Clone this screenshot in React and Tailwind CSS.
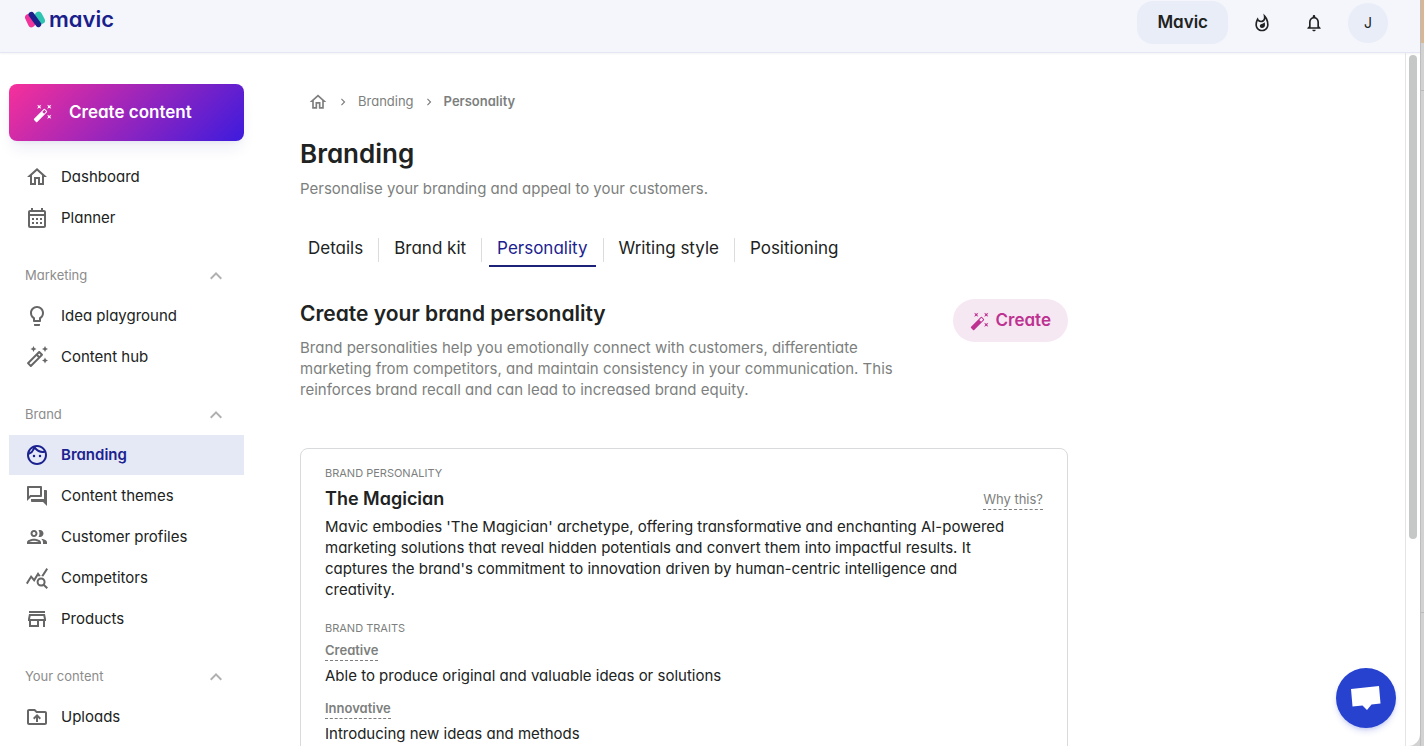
import { useState } from 'react';
import {
  MdAutoFixHigh,
  MdChevronRight,
  MdExpandLess,
  MdLightbulbOutline,
  MdNotificationsNone,
  MdOutlineAutoFixHigh,
  MdOutlineCalendarMonth,
  MdOutlineDriveFolderUpload,
  MdOutlineFace,
  MdOutlineForum,
  MdOutlineGroup,
  MdOutlineHome,
  MdOutlineStore,
  MdOutlineWhatshot,
  MdQueryStats,
} from 'react-icons/md';

const sections = [
  {
    items: [
      { label: 'Dashboard', icon: MdOutlineHome },
      { label: 'Planner', icon: MdOutlineCalendarMonth },
    ],
  },
  {
    title: 'Marketing',
    items: [
      { label: 'Idea playground', icon: MdLightbulbOutline },
      { label: 'Content hub', icon: MdOutlineAutoFixHigh },
    ],
  },
  {
    title: 'Brand',
    items: [
      { label: 'Branding', icon: MdOutlineFace },
      { label: 'Content themes', icon: MdOutlineForum },
      { label: 'Customer profiles', icon: MdOutlineGroup },
      { label: 'Competitors', icon: MdQueryStats },
      { label: 'Products', icon: MdOutlineStore },
    ],
  },
  {
    title: 'Your content',
    items: [{ label: 'Uploads', icon: MdOutlineDriveFolderUpload }],
  },
];

const tabs = ['Details', 'Brand kit', 'Personality', 'Writing style', 'Positioning'];

const traits = [
  { name: 'Creative', text: 'Able to produce original and valuable ideas or solutions' },
  { name: 'Innovative', text: 'Introducing new ideas and methods' },
];

function Logo() {
  return (
    <a href="#" className="flex items-center gap-1 text-[#1a1f8c]">
      <svg width="20" height="17" viewBox="0 0 20 17" strokeLinecap="round">
        <path d="M3.600 6.500 6.500 12.800" stroke="#f0349b" strokeWidth="7" />
        <path d="M13.600 4.200 16.400 9.500" stroke="#2fc4b2" strokeWidth="7" />
        <path d="M6.400 3.600 13.400 13.400" stroke="#1a1f8c" strokeWidth="5.600" />
      </svg>
      <span className="text-[22px] leading-6 font-semibold">mavic</span>
    </a>
  );
}

function Header() {
  return (
    <header className="flex h-[53px] shrink-0 items-start justify-between border-b border-[#e3e6f4] bg-[#f5f6fc] pr-8 pl-[25px] shadow-xs">
      <div className="pt-[7px]">
        <Logo />
      </div>
      <div className="flex items-center pt-px">
        <button className="h-[43px] rounded-2xl bg-[#e9edf8] px-5 text-[17px] font-semibold">Mavic</button>
        <button aria-label="Trending" className="ml-[23px] p-px">
          <MdOutlineWhatshot size={20} />
        </button>
        <button aria-label="Notifications" className="ml-[30px] p-px">
          <MdNotificationsNone size={20} />
        </button>
        <button className="ml-[23px] size-10 rounded-full bg-[#e9edf8] text-sm">J</button>
      </div>
    </header>
  );
}

function NavItem({ item, active, onSelect }) {
  const Icon = item.icon;
  return (
    <button
      onClick={() => onSelect(item.label)}
      className={`flex h-10 w-full items-center gap-3 px-4 text-left text-[15px] ${
        active ? 'bg-[#e5e8f5] font-semibold text-[#1b2290]' : ''
      }`}
    >
      <Icon size={24} className={active ? '' : 'text-[#666]'} />
      {item.label}
    </button>
  );
}

function Sidebar() {
  const [active, setActive] = useState('Branding');

  return (
    <aside className="flex w-[244px] shrink-0 flex-col pt-[31px] pl-[9px]">
      <button className="mb-4 flex h-[57px] shrink-0 items-center gap-4 rounded-lg bg-linear-135/srgb from-[#f7309a] to-[#3d1bdd] px-6 text-[17px] font-semibold text-white shadow-lg shadow-[#1b229014]">
        <MdAutoFixHigh size={20} />
        Create content
      </button>
      {sections.map((section) => (
        <div key={section.items[0].label} className="mb-[18px] shrink-0">
          {section.title && (
            <button className="flex h-10 w-full items-center justify-between px-4 text-[13px] text-[#8c8c8c]">
              {section.title}
              <MdExpandLess size={24} className="text-[#b0b0b0]" />
            </button>
          )}
          <nav className="flex flex-col gap-px">
            {section.items.map((item) => (
              <NavItem key={item.label} item={item} active={item.label === active} onSelect={setActive} />
            ))}
          </nav>
        </div>
      ))}
    </aside>
  );
}

function Breadcrumbs() {
  return (
    <nav aria-label="Breadcrumb" className="flex h-5 items-center gap-2 px-2 text-[13px] text-[#7d7f7e]">
      <a href="#" aria-label="Home">
        <MdOutlineHome size={20} />
      </a>
      <MdChevronRight size={14} />
      <a href="#">Branding</a>
      <MdChevronRight size={14} />
      <span className="font-semibold">Personality</span>
    </nav>
  );
}

function Tabs() {
  const [selected, setSelected] = useState('Personality');

  return (
    <div className="mt-[34px] flex">
      {tabs.map((tab, i) => (
        <div key={tab} className="flex items-start">
          {i > 0 && <span className="mx-[7px] mt-[5px] h-6 w-px bg-[#dcdcdc]" />}
          <button
            onClick={() => setSelected(tab)}
            className={`h-[34px] border-b-2 px-2 text-[17px] ${
              tab === selected ? 'border-[#1b2278] text-[#1b2290]' : 'border-transparent'
            }`}
          >
            {tab}
          </button>
        </div>
      ))}
    </div>
  );
}

function PersonalityCard() {
  return (
    <section className="mt-12 rounded-lg border border-[#d9dadb] px-6 pt-4 pb-6">
      <h4 className="text-[11px] leading-4 text-[#7d7f7e] uppercase">Brand personality</h4>
      <div className="mt-1 flex items-center justify-between">
        <h3 className="text-lg leading-7 font-semibold">The Magician</h3>
        <button className="border-b border-dashed border-[#7d7f7e] text-[13px] leading-5 text-[#7d7f7e]">
          Why this?
        </button>
      </div>
      <p className="mt-[3px] pr-7 text-[15px] leading-[21px]">
        Mavic embodies 'The Magician' archetype, offering transformative and enchanting AI-powered marketing
        solutions that reveal hidden potentials and convert them into impactful results. It captures the brand's
        commitment to innovation driven by human-centric intelligence and creativity.
      </p>
      <h4 className="mt-5 mb-1 text-[11px] leading-4 text-[#7d7f7e] uppercase">Brand traits</h4>
      {traits.map((trait) => (
        <div key={trait.name} className="mb-3">
          <button className="block border-b border-dashed border-[#7d7f7e] text-[13px] leading-5 font-semibold text-[#7d7f7e]">
            {trait.name}
          </button>
          <p className="mt-1 text-[15px] leading-[21px]">{trait.text}</p>
        </div>
      ))}
    </section>
  );
}

function ChatButton() {
  return (
    <button
      aria-label="Open chat"
      className="fixed right-7 bottom-[18px] flex size-[60px] items-center justify-center rounded-full bg-[#2742cf] shadow-md shadow-[#2742cf33]"
    >
      <svg width="30" height="26" viewBox="0 0 30 26" fill="#fff">
        <path d="M0 4 28 1 29.500 18.500 20.500 19.500 16 25 11.500 20.500 1.500 21.500Z" />
      </svg>
    </button>
  );
}

export default function App() {
  return (
    <div className="flex h-screen overflow-hidden bg-[#d2d2d3] font-[Inter,sans-serif] text-[#202322] [font-feature-settings:'cv11']">
      <div className="flex min-w-0 flex-1 flex-col overflow-hidden rounded-br-xl bg-white">
        <Header />
        <div className="flex min-h-0 flex-1">
          <Sidebar />
          <main className="min-w-0 flex-1 overflow-hidden pt-[39px] pr-6 pl-14">
            <div className="max-w-[768px]">
              <Breadcrumbs />
              <h1 className="mt-6 text-[26px] leading-9 font-semibold">Branding</h1>
              <p className="mt-[6px] text-[15px] leading-[21px] text-[#7d7f7e]">
                Personalise your branding and appeal to your customers.
              </p>
              <Tabs />
              <div className="mt-8 flex items-start justify-between">
                <div className="max-w-[620px]">
                  <h2 className="text-[21px] leading-[30px] font-semibold">Create your brand personality</h2>
                  <p className="mt-2 text-[15px] leading-[21px] text-[#7d7f7e]">
                    Brand personalities help you emotionally connect with customers, differentiate marketing from
                    competitors, and maintain consistency in your communication. This reinforces brand recall and
                    can lead to increased brand equity.
                  </p>
                </div>
                <button className="flex h-[43px] items-center gap-1.5 rounded-full bg-[#f6e8f3] px-[17px] text-[17px] font-semibold text-[#bd3291]">
                  <MdAutoFixHigh size={20} />
                  Create
                </button>
              </div>
              <PersonalityCard />
            </div>
          </main>
          <div className="w-[15px] shrink-0 border-l border-[#e4e4e4] px-[3px] pt-[2px]">
            <div className="h-[70%] w-2 rounded-full bg-[#c6c8c7]" />
          </div>
        </div>
      </div>
      {/* sliver of the desktop behind the window */}
      <div className="w-1 shrink-0 border-l border-[#bdbdbd]">
        <div className="h-[43px] bg-[#d9b795]" />
        <div className="h-12 border-b border-[#b9b9b9]" />
        <div className="h-[522px] border-b border-[#b9b9b9]" />
      </div>
      <ChatButton />
    </div>
  );
}
